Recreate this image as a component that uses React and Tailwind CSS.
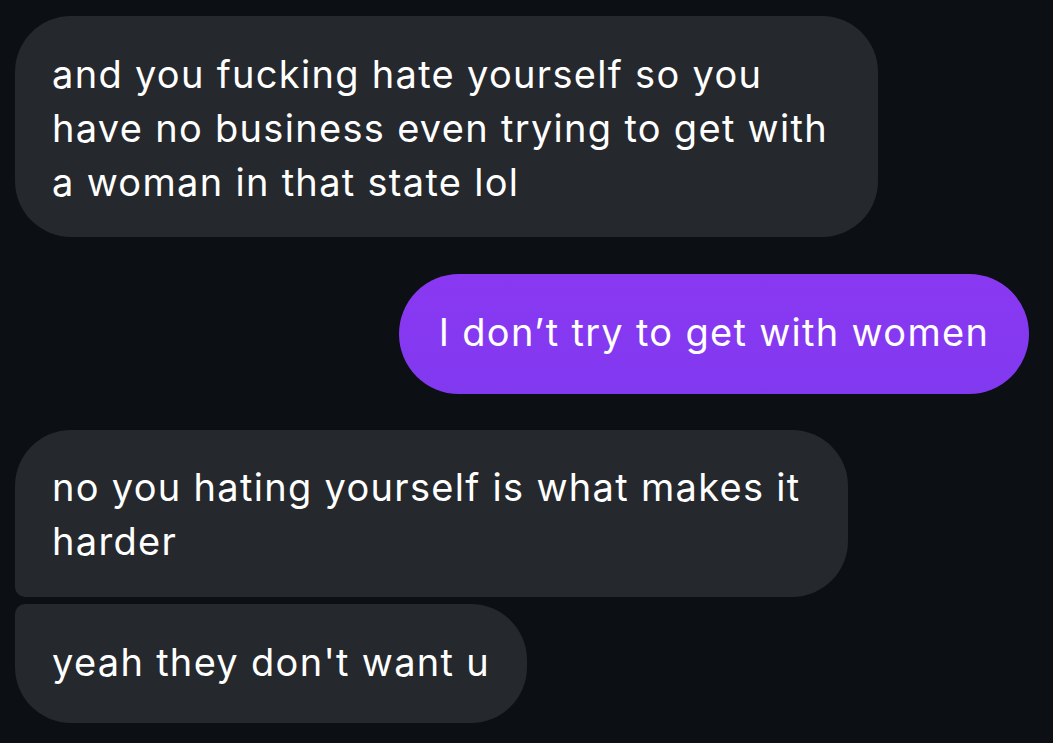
export default function App() {
  const font = { fontFamily: "Inter, 'Noto Sans', sans-serif" };

  return (
    <div
      className="w-[1053px] h-[743px] bg-[#0c1014] overflow-hidden flex flex-col pt-4 pl-[15px] pr-6 text-white text-[38px] leading-[54px] tracking-[1.3px]"
      style={font}
    >
      {/* INCOMING */}
      <div className="w-[863px] h-[221px] bg-[#25282c] rounded-[56px] pl-[37px] pt-[31px] whitespace-nowrap">
        <p>and you fucking hate yourself so you</p>
        <p>have no business even trying to get with</p>
        <p>a woman in that state lol</p>
      </div>

      {/* OUTGOING */}
      <div className="self-end mt-[37px] w-[630px] h-[120px] rounded-full bg-gradient-to-b from-[#8a38f2] to-[#8139f0] flex items-center justify-center pb-1 whitespace-nowrap">
        I don’t try to get with women
      </div>

      {/* INCOMING GROUP */}
      <div className="mt-[36px] w-[833px] h-[167px] bg-[#25282c] rounded-[56px] rounded-bl-[10px] pl-[37px] pt-[30px] whitespace-nowrap">
        <p>no you hating yourself is what makes it</p>
        <p>harder</p>
      </div>
      <div className="mt-[7px] w-[512px] h-[119px] bg-[#25282c] rounded-[56px] rounded-tl-[10px] pl-[37px] pb-1 flex items-center whitespace-nowrap">
        yeah they don't want u
      </div>
    </div>
  );
}
